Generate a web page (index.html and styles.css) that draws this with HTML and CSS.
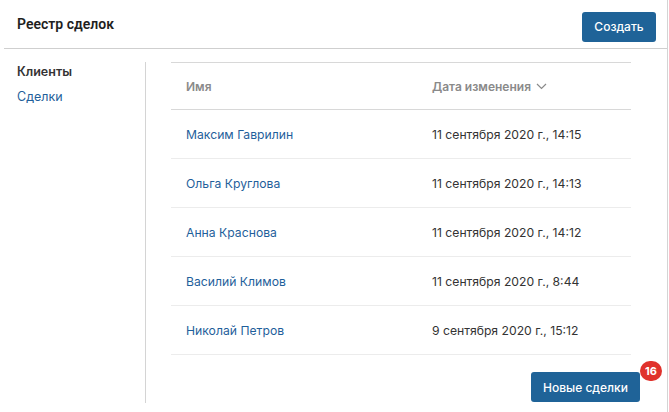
FILE: index.html
```html
<!DOCTYPE html>
<html lang="ru">
<head>
<meta charset="utf-8">
<link rel="stylesheet" href="styles.css">
</head>
<body>
<div class="app">
  <header class="header">
    <h1 class="title">Реестр сделок</h1>
    <button class="btn btn-create">Создать</button>
  </header>
  <div class="body">
    <nav class="sidebar">
      <div class="nav-title">Клиенты</div>
      <a class="nav-link">Сделки</a>
    </nav>
    <main class="main">
      <div class="table">
        <div class="row head">
          <div class="c-name">Имя</div>
          <div class="c-date">Дата изменения
            <svg class="chev" width="11" height="7" viewBox="0 0 11 7"><path d="M1 1l4.5 4.5L10 1" fill="none" stroke="#8a8a8a" stroke-width="1.2"/></svg>
          </div>
        </div>
        <div class="row"><div class="c-name link">Максим Гаврилин</div><div class="c-date">11 сентября 2020 г., 14:15</div></div>
        <div class="row"><div class="c-name link">Ольга Круглова</div><div class="c-date">11 сентября 2020 г., 14:13</div></div>
        <div class="row"><div class="c-name link">Анна Краснова</div><div class="c-date">11 сентября 2020 г., 14:12</div></div>
        <div class="row"><div class="c-name link">Василий Климов</div><div class="c-date">11 сентября 2020 г., 8:44</div></div>
        <div class="row"><div class="c-name link">Николай Петров</div><div class="c-date">9 сентября 2020 г., 15:12</div></div>
      </div>
      <div class="footer">
        <button class="btn btn-new">Новые сделки<span class="badge">16</span></button>
      </div>
    </main>
  </div>
</div>
</body>
</html>
```
FILE: styles.css
```css
* { box-sizing: border-box; }
html, body { margin: 0; padding: 0; background: #fff; }
body { font-family: Inter, "Noto Sans", sans-serif; color: #333; }
.app {
  width: 668px;
  height: 412px;
  border-right: 1px solid #d4d4d4;
  display: flex;
  flex-direction: column;
}
.header {
  height: 49px;
  margin-left: 4px;
  border-bottom: 1px solid #cfcfcf;
  display: flex;
  align-items: center;
  justify-content: space-between;
  padding: 5px 11px 0 13px;
}
.title {
  margin: 0 0 5px;
  font-family: Roboto, sans-serif;
  font-size: 14px;
  font-weight: 600;
  color: #1f1f1f;
}
.btn {
  border: 0;
  border-radius: 3px;
  background: #1f6398;
  color: #fff;
  font-family: Inter, sans-serif;
  font-weight: 500;
  font-size: 12px;
  cursor: pointer;
}
.btn-create {
  width: 74px;
  height: 30px;
}
.body {
  flex: 1;
  display: flex;
  padding-top: 13px;
  padding-bottom: 9px;
}
.sidebar {
  width: 146px;
  border-right: 1px solid #d4d4d4;
  padding: 2px 0 0 17px;
  display: flex;
  flex-direction: column;
  gap: 10px;
}
.nav-title {
  font-size: 12.5px;
  font-weight: 600;
  color: #333;
}
.nav-link {
  font-size: 12.5px;
  color: #1f5f9b;
}
.main {
  flex: 1;
  padding-left: 25px;
  display: flex;
  flex-direction: column;
}
.table {
  width: 460px;
  border-top: 1px solid #d8d8d8;
}
.row {
  display: flex;
  align-items: center;
  height: 49px;
  padding-left: 15px;
  border-bottom: 1px solid #ececec;
  font-size: 12.2px;
}
.row.head {
  height: 47px;
  border-bottom: 1px solid #d8d8d8;
  color: #8a8a8a;
  font-weight: 600;
  font-size: 12px;
}
.c-name { width: 246px; }
.c-date { display: flex; align-items: center; gap: 5px; }
.link { color: #1f5f9b; }
.chev { margin-top: 1px; }
.footer {
  width: 469px;
  display: flex;
  justify-content: flex-end;
  padding-top: 17px;
}
.btn-new {
  position: relative;
  width: 109px;
  height: 30px;
}
.badge {
  position: absolute;
  top: -11px;
  right: -22px;
  min-width: 22px;
  height: 20px;
  border-radius: 10px;
  background: #e0322c;
  color: #fff;
  font-size: 11px;
  font-weight: 700;
  line-height: 20px;
  text-align: center;
}
```
